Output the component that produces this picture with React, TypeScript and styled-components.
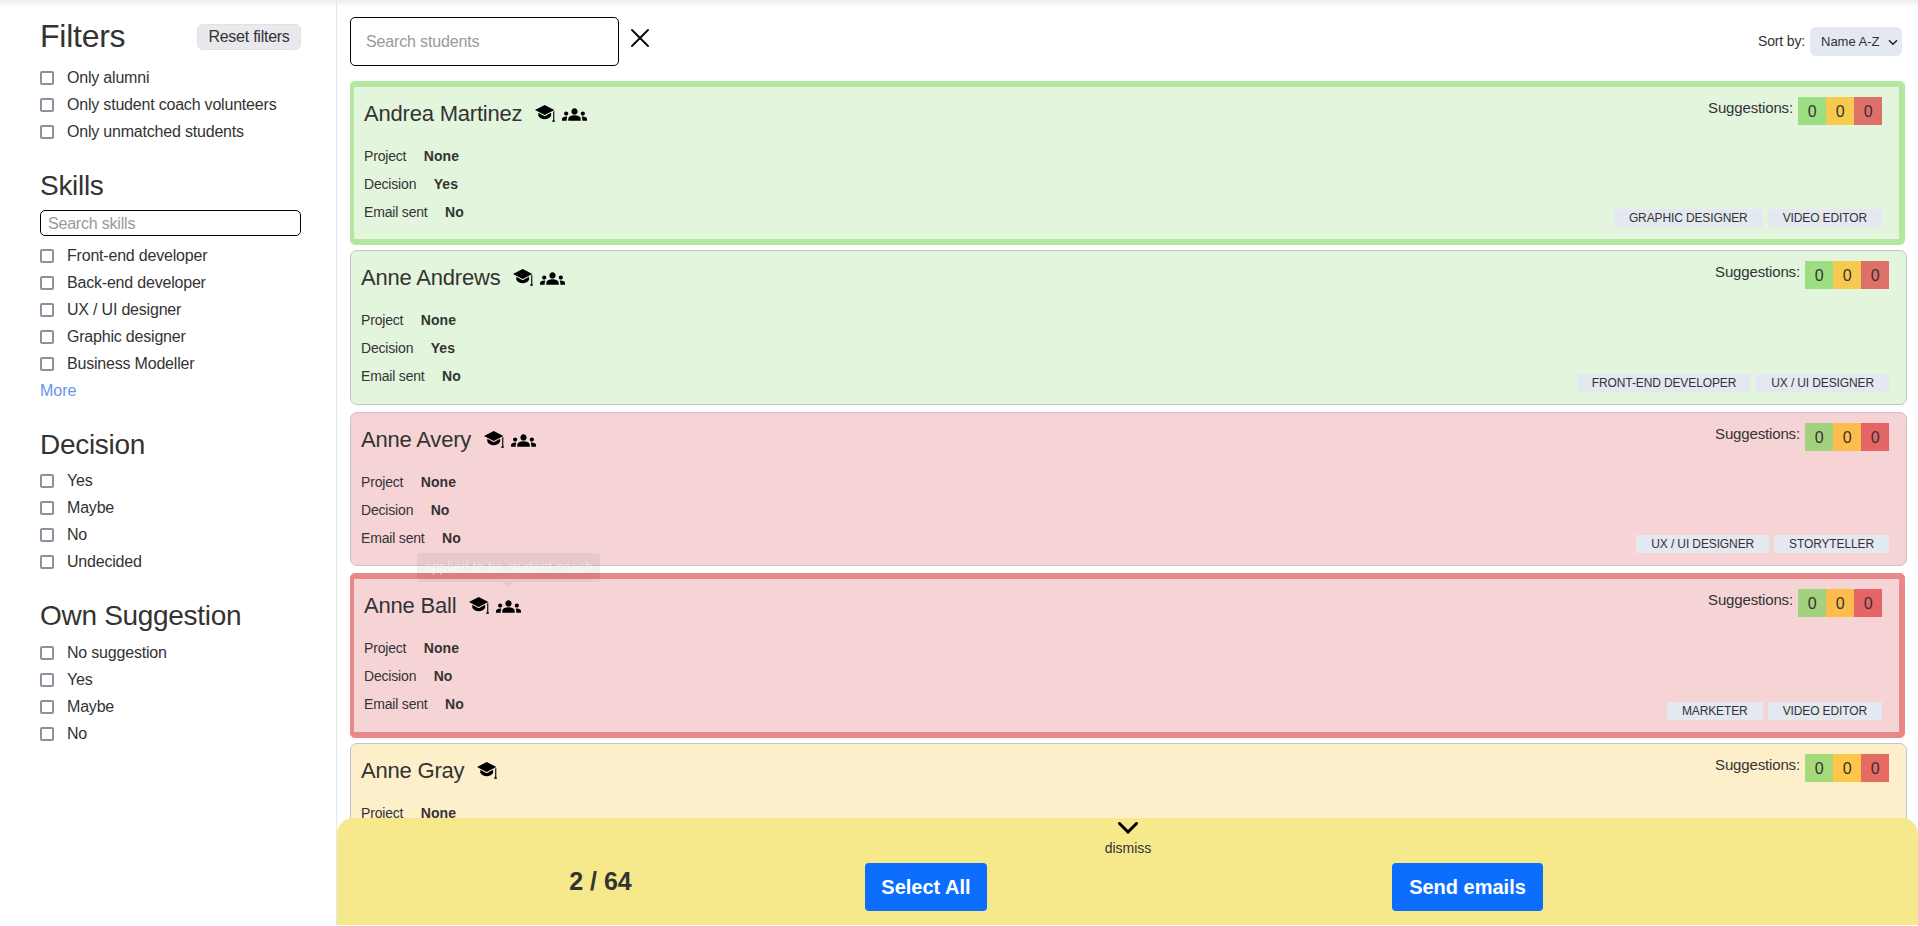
import React from "react";
import styled, { createGlobalStyle } from "styled-components";
import { MdGroups } from "react-icons/md";

const GlobalStyle = createGlobalStyle`
  * { box-sizing: border-box; }
  body {
    margin: 0;
    overflow: hidden;
    background: #fff;
    color: #333;
    font: 16px/24px "Liberation Sans", Arial, sans-serif;
  }
`;

const Page = styled.div`
  display: flex;
  height: 926px;
  background: linear-gradient(rgba(0, 0, 0, 0.07), transparent) 0 0 / 100% 7px no-repeat;
`;

const Sidebar = styled.aside`
  width: 337px;
  height: 925px;
  padding: 16px 35px 0 40px;
  border-right: 1px solid #e4e8f1;
`;

const FilterHead = styled.div`
  display: flex;
  justify-content: space-between;
  align-items: center;
  height: 40px;
  margin-bottom: 8px;
`;

const Title = styled.h1`
  margin: 0;
  font-size: 32px;
  font-weight: 400;
  line-height: 38px;
  letter-spacing: -0.25px;
`;

const ResetButton = styled.button`
  width: 104px;
  height: 26px;
  margin-top: 1px;
  padding: 0;
  border: 1px solid #e2e1e6;
  border-radius: 6px;
  background: #e9e8ed;
  color: #333;
  font: inherit;
  letter-spacing: -0.25px;
`;

const GroupTitle = styled.h2<{ $bottom: number }>`
  margin: 24px 0 ${(p) => p.$bottom}px;
  font-size: 28px;
  font-weight: 400;
  line-height: 34px;
  letter-spacing: -0.3px;
`;

const SkillSearch = styled.input`
  display: block;
  width: 261px;
  height: 26px;
  margin-bottom: 6px;
  padding: 1px 7px 0;
  border: 1px solid #000;
  border-radius: 5px;
  font: inherit;
  letter-spacing: -0.2px;
  &::placeholder { color: #999; }
`;

const CheckRow = styled.label`
  display: flex;
  align-items: center;
  gap: 13px;
  height: 27px;
  letter-spacing: -0.2px;
`;

const Box = styled.span`
  width: 14px;
  height: 14px;
  margin-top: 1px;
  border: 2px solid #8f8f9d;
  border-radius: 2px;
  background: #fff;
`;

const More = styled.a`
  display: block;
  height: 27px;
  line-height: 28px;
  color: #6495ed;
`;

const Main = styled.main`
  position: relative;
  flex: 1;
  height: 925px;
  overflow: hidden;
`;

const Toolbar = styled.div`
  display: flex;
  align-items: center;
  height: 80.8px;
  padding: 3px 16px 0 13px;
`;

const StudentSearch = styled.input`
  width: 269px;
  height: 49px;
  padding: 0 15px;
  border: 1px solid #000;
  border-radius: 5px;
  font: inherit;
  letter-spacing: -0.15px;
  &::placeholder { color: #999; }
`;

const ClearIcon = styled.svg`
  width: 18px;
  height: 18px;
  margin: -8px auto 0 12px;
`;

const SortLabel = styled.span`
  margin: -1px 5px 0 0;
  font-size: 14px;
  letter-spacing: -0.15px;
`;

const SortSelect = styled.div`
  display: flex;
  align-items: center;
  justify-content: space-between;
  width: 92px;
  height: 29px;
  padding: 0 4px 0 11px;
  border-radius: 6px;
  background: #e4e8f1;
  font-size: 13px;
`;

type Tone = "yes" | "no" | "maybe";

const tones = {
  yes: { fill: "#e3f5dd", edge: "#b2e89e", counts: ["#9cdf82", "#f6ca4f", "#dd7068"] },
  no: { fill: "#f6d4d6", edge: "#ea8789", counts: ["#a2d27f", "#fcbd4c", "#e46467"] },
  maybe: { fill: "#feefcb", edge: "#f9cf6b", counts: ["#a4da7c", "#fec74a", "#e66c63"] },
};

const Card = styled.article<{ $tone: Tone; $selected: boolean }>`
  display: flex;
  justify-content: space-between;
  margin: 0 ${(p) => (p.$selected ? 13 : 11)}px ${(p) => (p.$selected ? 5 : 7)}px 13px;
  height: ${(p) => (p.$selected ? 164.5 : 154.5)}px;
  padding: 10px 17px 0 10px;
  border: ${(p) => (p.$selected ? "6px" : "1px")} solid
    ${(p) => (p.$selected ? tones[p.$tone].edge : "#c4c4c4")};
  border-left-width: ${(p) => (p.$selected ? 4 : 1)}px;
  border-radius: ${(p) => (p.$selected ? 5 : 7)}px;
  background: ${(p) => tones[p.$tone].fill};
`;

const NameRow = styled.div`
  display: flex;
  height: 34px;
  margin-bottom: 11px;
`;

const Name = styled.h3`
  margin: 0 12.5px 0 0;
  font-size: 22px;
  font-weight: 400;
  line-height: 34px;
  letter-spacing: -0.2px;
`;

const CapSvg = styled.svg`
  width: 20px;
  height: 17px;
  margin: 8px 7px 0 0;
`;

const GroupIcon = styled(MdGroups)`
  width: 25px;
  height: 25px;
  margin-top: 5px;
  color: #000;
`;

const Detail = styled.div`
  display: flex;
  gap: 17.4px;
  height: 28px;
  font-size: 14px;
  line-height: 28px;
`;

const DetailLabel = styled.span`
  letter-spacing: -0.18px;
`;

const Value = styled.strong`
  letter-spacing: 0.1px;
`;

const RightSide = styled.div`
  display: flex;
  flex-direction: column;
  align-items: flex-end;
  justify-content: space-between;
  padding-bottom: 12px;
`;

const Suggestions = styled.div`
  display: flex;
  font-size: 15px;
  line-height: 22.4px;
  letter-spacing: -0.15px;
`;

const Count = styled.span<{ $color: string; $first?: boolean }>`
  width: 28px;
  height: 28px;
  margin-left: ${(p) => (p.$first ? 5 : 0)}px;
  background: ${(p) => p.$color};
  font-size: 16px;
  line-height: 30px;
  text-align: center;
`;

const Tags = styled.div`
  display: flex;
  gap: 5px;
`;

const Tag = styled.span`
  height: 18px;
  padding: 0 15px;
  background: #e4e8f1;
  font-size: 12px;
  line-height: 18px;
  letter-spacing: -0.12px;
  white-space: nowrap;
`;

const Tooltip = styled.div`
  position: absolute;
  left: 80px;
  top: 553px;
  width: 183px;
  height: 29px;
  border-radius: 4px;
  background: rgba(0, 0, 0, 0.055);
  color: rgba(255, 255, 255, 0.45);
  font-size: 14px;
  line-height: 29px;
  letter-spacing: -0.1px;
  text-align: center;
  &::after {
    content: "";
    position: absolute;
    left: 86px;
    top: 29px;
    border: 5px solid transparent;
    border-top-color: rgba(0, 0, 0, 0.055);
    border-bottom: 0;
  }
`;

const Footer = styled.footer`
  position: absolute;
  left: 0;
  right: 0;
  bottom: 0;
  height: 107px;
  border-radius: 16px 16px 0 0;
  background: #f5e98b;
`;

const Dismiss = styled.div`
  display: flex;
  flex-direction: column;
  align-items: center;
  height: 45px;
  padding: 4px 0 0 1px;
  font-size: 14px;
  line-height: 28px;
`;

const FooterRow = styled.div`
  display: grid;
  grid-template-columns: repeat(3, 1fr);
`;

const Selected = styled.strong`
  justify-self: center;
  font-size: 25px;
  line-height: 36px;
`;

const BlueButton = styled.button<{ $width: number }>`
  width: ${(p) => p.$width}px;
  height: 48px;
  margin-left: 1px;
  padding: 0;
  border: 0;
  border-radius: 4px;
  background: #0d6efd;
  color: #fff;
  font: bold 20px/48px "Liberation Sans", Arial, sans-serif;
`;

type Student = {
  name: string;
  tone: Tone;
  decision: string;
  tags: string[];
  selected?: boolean;
  coach?: boolean;
};

const students: Student[] = [
  { name: "Andrea Martinez", tone: "yes", decision: "Yes", tags: ["GRAPHIC DESIGNER", "VIDEO EDITOR"], selected: true, coach: true },
  { name: "Anne Andrews", tone: "yes", decision: "Yes", tags: ["FRONT-END DEVELOPER", "UX / UI DESIGNER"], coach: true },
  { name: "Anne Avery", tone: "no", decision: "No", tags: ["UX / UI DESIGNER", "STORYTELLER"], coach: true },
  { name: "Anne Ball", tone: "no", decision: "No", tags: ["MARKETER", "VIDEO EDITOR"], selected: true, coach: true },
  { name: "Anne Gray", tone: "maybe", decision: "Maybe", tags: [] },
];

function CapIcon() {
  return (
    <CapSvg viewBox="0 0 20 17">
      <path d="M9.7 0L19.4 5L9.7 10L0 5Z" />
      <path d="M3.3 7.8L9.7 11.2L16.1 7.8V10.8C15 13 12.6 14.2 9.7 14.2C6.8 14.2 4.4 13 3.3 10.8Z" />
      <path d="M18.2 6.6L19.3 6V14.4L20 16.8H16.8L18.2 14.8Z" />
    </CapSvg>
  );
}

function Checks({ items }: { items: string[] }) {
  return (
    <>
      {items.map((item) => (
        <CheckRow key={item}>
          <Box />
          {item}
        </CheckRow>
      ))}
    </>
  );
}

function StudentCard({ student }: { student: Student }) {
  const details = [
    ["Project", "None"],
    ["Decision", student.decision],
    ["Email sent", "No"],
  ];
  return (
    <Card $tone={student.tone} $selected={!!student.selected}>
      <div>
        <NameRow>
          <Name>{student.name}</Name>
          <CapIcon />
          {student.coach && <GroupIcon />}
        </NameRow>
        {details.map(([label, value]) => (
          <Detail key={label}>
            <DetailLabel>{label}</DetailLabel>
            <Value>{value}</Value>
          </Detail>
        ))}
      </div>
      <RightSide>
        <Suggestions>
          Suggestions:
          {tones[student.tone].counts.map((color, i) => (
            <Count key={color} $color={color} $first={i === 0}>0</Count>
          ))}
        </Suggestions>
        <Tags>
          {student.tags.map((tag) => (
            <Tag key={tag}>{tag}</Tag>
          ))}
        </Tags>
      </RightSide>
    </Card>
  );
}

export default function App() {
  return (
    <>
      <GlobalStyle />
      <Page>
        <Sidebar>
          <FilterHead>
            <Title>Filters</Title>
            <ResetButton>Reset filters</ResetButton>
          </FilterHead>
          <Checks items={["Only alumni", "Only student coach volunteers", "Only unmatched students"]} />
          <GroupTitle $bottom={7}>Skills</GroupTitle>
          <SkillSearch placeholder="Search skills" />
          <Checks items={["Front-end developer", "Back-end developer", "UX / UI designer", "Graphic designer", "Business Modeller"]} />
          <More>More</More>
          <GroupTitle $bottom={5}>Decision</GroupTitle>
          <Checks items={["Yes", "Maybe", "No", "Undecided"]} />
          <GroupTitle $bottom={6}>Own Suggestion</GroupTitle>
          <Checks items={["No suggestion", "Yes", "Maybe", "No"]} />
        </Sidebar>
        <Main>
          <Toolbar>
            <StudentSearch placeholder="Search students" />
            <ClearIcon viewBox="0 0 18 18">
              <path d="M1 1L17 17M17 1L1 17" stroke="#000" strokeWidth="1.8" strokeLinecap="round" fill="none" />
            </ClearIcon>
            <SortLabel>Sort by:</SortLabel>
            <SortSelect>
              Name A-Z
              <svg width="10" height="10" viewBox="0 0 10 10">
                <path d="M1 3.2L5 7.2L9 3.2" stroke="#222" strokeWidth="1.5" fill="none" />
              </svg>
            </SortSelect>
          </Toolbar>
          {students.map((student) => (
            <StudentCard key={student.name} student={student} />
          ))}
          <Tooltip>applied to be student coach</Tooltip>
          <Footer>
            <Dismiss>
              <svg width="20" height="12" viewBox="0 0 20 12">
                <path d="M1.5 1.5L10 10L18.5 1.5" stroke="#000" strokeWidth="3" strokeLinecap="round" fill="none" />
              </svg>
              dismiss
            </Dismiss>
            <FooterRow>
              <Selected>2 / 64</Selected>
              <BlueButton $width={122}>Select All</BlueButton>
              <BlueButton $width={151}>Send emails</BlueButton>
            </FooterRow>
          </Footer>
        </Main>
      </Page>
    </>
  );
}
